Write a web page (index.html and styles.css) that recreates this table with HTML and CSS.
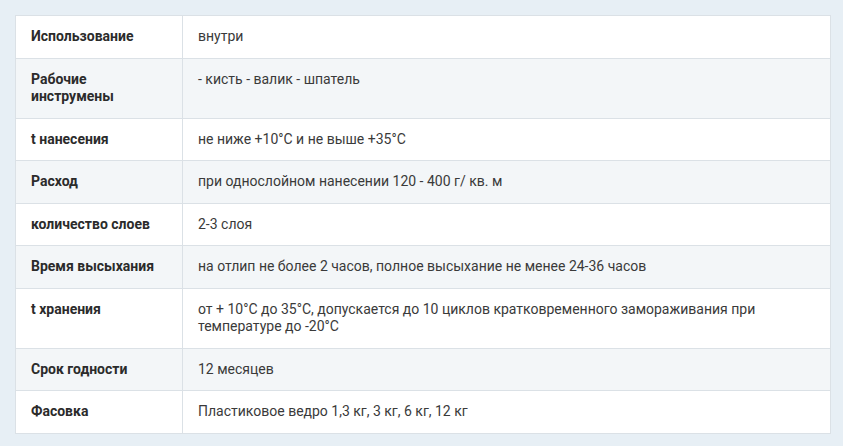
FILE: index.html
```html
<!DOCTYPE html>
<html lang="ru">
<head>
<meta charset="utf-8">
<link rel="stylesheet" href="styles.css">
</head>
<body>
<div class="wrap">
<table class="spec">
<tr><th>Использование</th><td>внутри</td></tr>
<tr><th>Рабочие<br>инструмены</th><td>- кисть - валик - шпатель</td></tr>
<tr><th>t нанесения</th><td>не ниже +10°C и не выше +35°C</td></tr>
<tr><th>Расход</th><td>при однослойном нанесении 120 - 400 г/ кв. м</td></tr>
<tr><th>количество слоев</th><td>2-3 слоя</td></tr>
<tr><th>Время высыхания</th><td>на отлип не более 2 часов, полное высыхание не менее 24-36 часов</td></tr>
<tr><th>t хранения</th><td>от + 10°C до 35°C, допускается до 10 циклов кратковременного замораживания при температуре до -20°C</td></tr>
<tr><th>Срок годности</th><td>12 месяцев</td></tr>
<tr><th>Фасовка</th><td>Пластиковое ведро 1,3 кг, 3 кг, 6 кг, 12 кг</td></tr>
</table>
</div>
</body>
</html>
```
FILE: styles.css
```css
html, body { margin: 0; padding: 0; }
body {
  background: #e7eff5;
  font-family: Roboto, "Liberation Sans", Arial, sans-serif;
  font-size: 14px;
  color: #333;
}
.wrap { padding: 15px 12px 13px 15px; }
.spec {
  width: 816px;
  border-collapse: collapse;
  background: #fff;
  border: 1px solid #dbe1e6;
}
.spec th, .spec td {
  border: 1px solid #dbe1e6;
  padding: 12px 15px 12px 15px;
  line-height: 17.5px;
  text-align: left;
  vertical-align: top;
}
.spec th {
  width: 136px;
  font-weight: 700;
  color: #2b2b2b;
}
.spec td { font-weight: 400; color: #3a3a3a; }
.spec tr:nth-child(even) { background: #f3f6f8; }
```
